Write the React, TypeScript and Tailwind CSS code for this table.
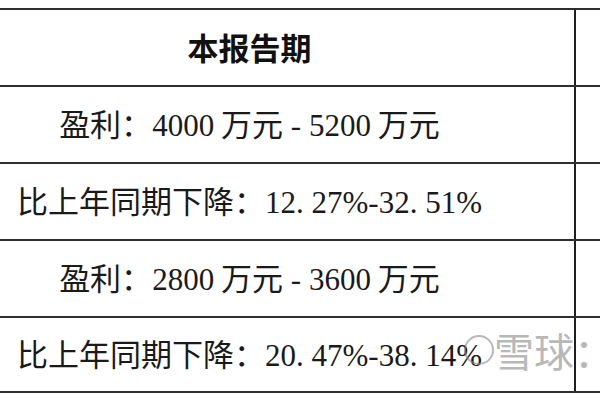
const cjk = "font-['Noto_Sans_CJK_SC',sans-serif]";
const serif = "font-['Liberation_Serif','Noto_Sans_CJK_SC',serif]";

function Row({ children, last }: { children: React.ReactNode; last?: boolean }) {
  return (
    <div className={`flex h-[77px] border-t-2 border-[#2f2f2f] ${last ? 'border-b-2' : ''}`}>
      <div className="flex w-[576px] shrink-0 items-center justify-center border-r-2 border-[#1f1f1f] pr-[75px]">
        {children}
      </div>
      <div className="flex-1" />
    </div>
  );
}

function Profit({ low, high }: { low: string; high: string }) {
  return (
    <p className={`${cjk} text-[31px] text-[#1a1a1a] whitespace-nowrap`}>
      盈利：<span className={serif}>{low}</span> 万元<span className={serif}>&nbsp;-&nbsp;</span>
      <span className={serif}>{high}</span> 万元
    </p>
  );
}

function Percent({ value }: { value: string }) {
  const [whole, frac] = value.split('.');
  return (
    <>
      {whole}
      <span className="mr-[0.25em]">.</span>
      {frac}
    </>
  );
}

function Decline({ from, to }: { from: string; to: string }) {
  return (
    <p className={`${cjk} text-[31px] text-[#1a1a1a] whitespace-nowrap`}>
      比上年同期下降：
      <span className={serif}>
        <Percent value={from} />%-<Percent value={to} />%
      </span>
    </p>
  );
}

export default function App() {
  return (
    <div className="relative h-[400px] w-[600px] overflow-hidden bg-white pt-2">
      <Row>
        <h2 className={`${cjk} text-[31px] font-bold text-[#111]`}>本报告期</h2>
      </Row>
      <Row>
        <Profit low="4000" high="5200" />
      </Row>
      <Row>
        <Decline from="12.27" to="32.51" />
      </Row>
      <Row>
        <Profit low="2800" high="3600" />
      </Row>
      <Row last>
        <Decline from="20.47" to="38.14" />
      </Row>

      {/* watermark */}
      <div className="pointer-events-none absolute left-[464px] top-[330px] flex items-center gap-0 whitespace-nowrap text-[#8a8a8a] opacity-60">
        <span className="h-[30px] w-[30px] shrink-0 rounded-full border-2 border-[#8a8a8a]" />
        <span className={`${cjk} text-[40px] leading-none`}>雪球：(</span>
      </div>
    </div>
  );
}
